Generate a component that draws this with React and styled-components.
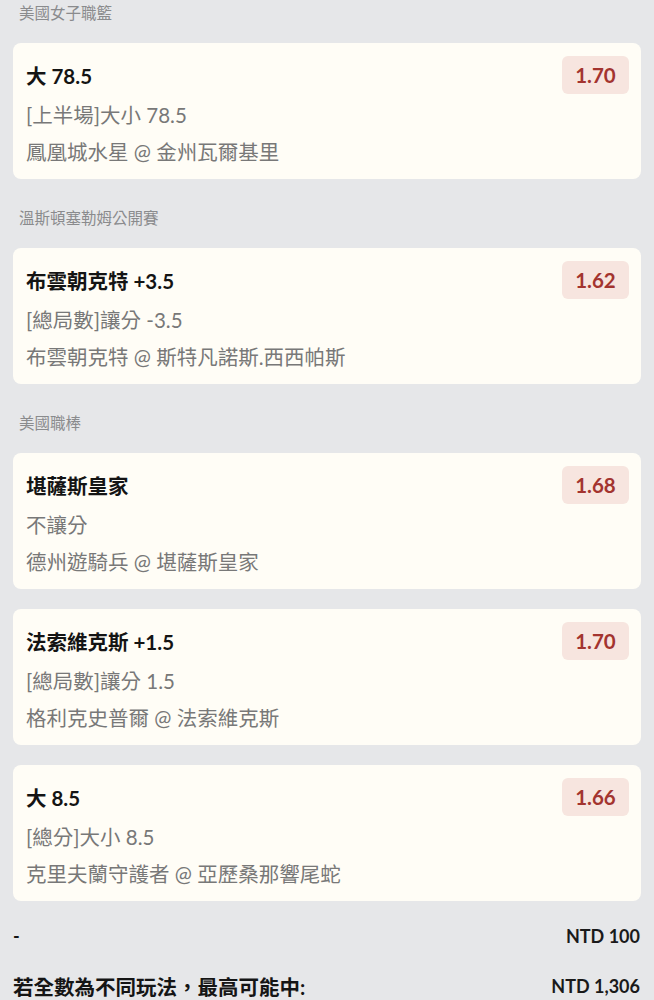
import React from "react";
import styled, { createGlobalStyle } from "styled-components";

const Global = createGlobalStyle`
  html, body {
    margin: 0;
    padding: 0;
    background: #e6e7e9;
  }
  body {
    font-family: Lato, "Noto Sans CJK TC", sans-serif;
    color: #151515;
  }
`;

const Page = styled.div`
  padding: 3px 13px 0 13px;
  background: #e6e7e9;
  min-height: 1000px;
  box-sizing: border-box;
`;

const Section = styled.section`
  display: flex;
  flex-direction: column;
  & + & {
    margin-top: 29px;
  }
`;

const League = styled.div`
  font-size: 15.5px;
  line-height: 20px;
  color: #8a8b8d;
  padding-left: 6px;
  margin-bottom: 20px;
`;

const CardList = styled.div`
  display: flex;
  flex-direction: column;
  gap: 20px;
`;

const Card = styled.div`
  background: #fffdf6;
  border-radius: 8px;
  padding: 13px 12px 8px 13px;
  height: 136px;
  box-sizing: border-box;
  display: flex;
  flex-direction: column;
`;

const TopRow = styled.div`
  display: flex;
  align-items: center;
  justify-content: space-between;
  height: 38px;
`;

const Pick = styled.div`
  font-size: 20.5px;
  font-weight: 700;
  color: #141414;
`;

const Odds = styled.div`
  background: #f7e5df;
  color: #a3342f;
  font-weight: 700;
  font-size: 20.5px;
  height: 38px;
  min-width: 67px;
  box-sizing: border-box;
  padding: 0 12px;
  border-radius: 6px;
  display: flex;
  align-items: center;
  justify-content: center;
`;

const Info = styled.div`
  font-size: 20.5px;
  line-height: 37px;
  color: #787878;
  margin-top: ${(p) => (p.$first ? "3px" : "0")};
  white-space: nowrap;
`;

const Footer = styled.div`
  margin-top: 20px;
  display: flex;
  flex-direction: column;
  gap: 20px;
`;

const FooterRow = styled.div`
  display: flex;
  align-items: center;
  justify-content: space-between;
  height: 30px;
  padding-right: 1px;
`;

const FooterLabel = styled.div`
  font-size: ${(p) => (p.$big ? "20.5px" : "18px")};
  font-weight: 700;
  color: #151515;
`;

const Amount = styled.div`
  font-size: 18px;
  font-weight: 700;
  color: #1a1a1a;
`;

const data = [
  {
    league: "美國女子職籃",
    bets: [
      { pick: "大 78.5", odds: "1.70", market: "[上半場]大小 78.5", match: "鳳凰城水星 @ 金州瓦爾基里" },
    ],
  },
  {
    league: "溫斯頓塞勒姆公開賽",
    bets: [
      { pick: "布雲朝克特 +3.5", odds: "1.62", market: "[總局數]讓分 -3.5", match: "布雲朝克特 @ 斯特凡諾斯.西西帕斯" },
    ],
  },
  {
    league: "美國職棒",
    bets: [
      { pick: "堪薩斯皇家", odds: "1.68", market: "不讓分", match: "德州遊騎兵 @ 堪薩斯皇家" },
      { pick: "法索維克斯 +1.5", odds: "1.70", market: "[總局數]讓分 1.5", match: "格利克史普爾 @ 法索維克斯" },
      { pick: "大 8.5", odds: "1.66", market: "[總分]大小 8.5", match: "克里夫蘭守護者 @ 亞歷桑那響尾蛇" },
    ],
  },
];

export default function App() {
  return (
    <>
      <Global />
      <Page>
        {data.map((s) => (
          <Section key={s.league}>
            <League>{s.league}</League>
            <CardList>
              {s.bets.map((b) => (
                <Card key={b.pick}>
                  <TopRow>
                    <Pick>{b.pick}</Pick>
                    <Odds>{b.odds}</Odds>
                  </TopRow>
                  <Info $first>{b.market}</Info>
                  <Info>{b.match}</Info>
                </Card>
              ))}
            </CardList>
          </Section>
        ))}
        <Footer>
          <FooterRow>
            <FooterLabel>-</FooterLabel>
            <Amount>NTD 100</Amount>
          </FooterRow>
          <FooterRow>
            <FooterLabel $big>若全數為不同玩法，最高可能中:</FooterLabel>
            <Amount>NTD 1,306</Amount>
          </FooterRow>
        </Footer>
      </Page>
    </>
  );
}
